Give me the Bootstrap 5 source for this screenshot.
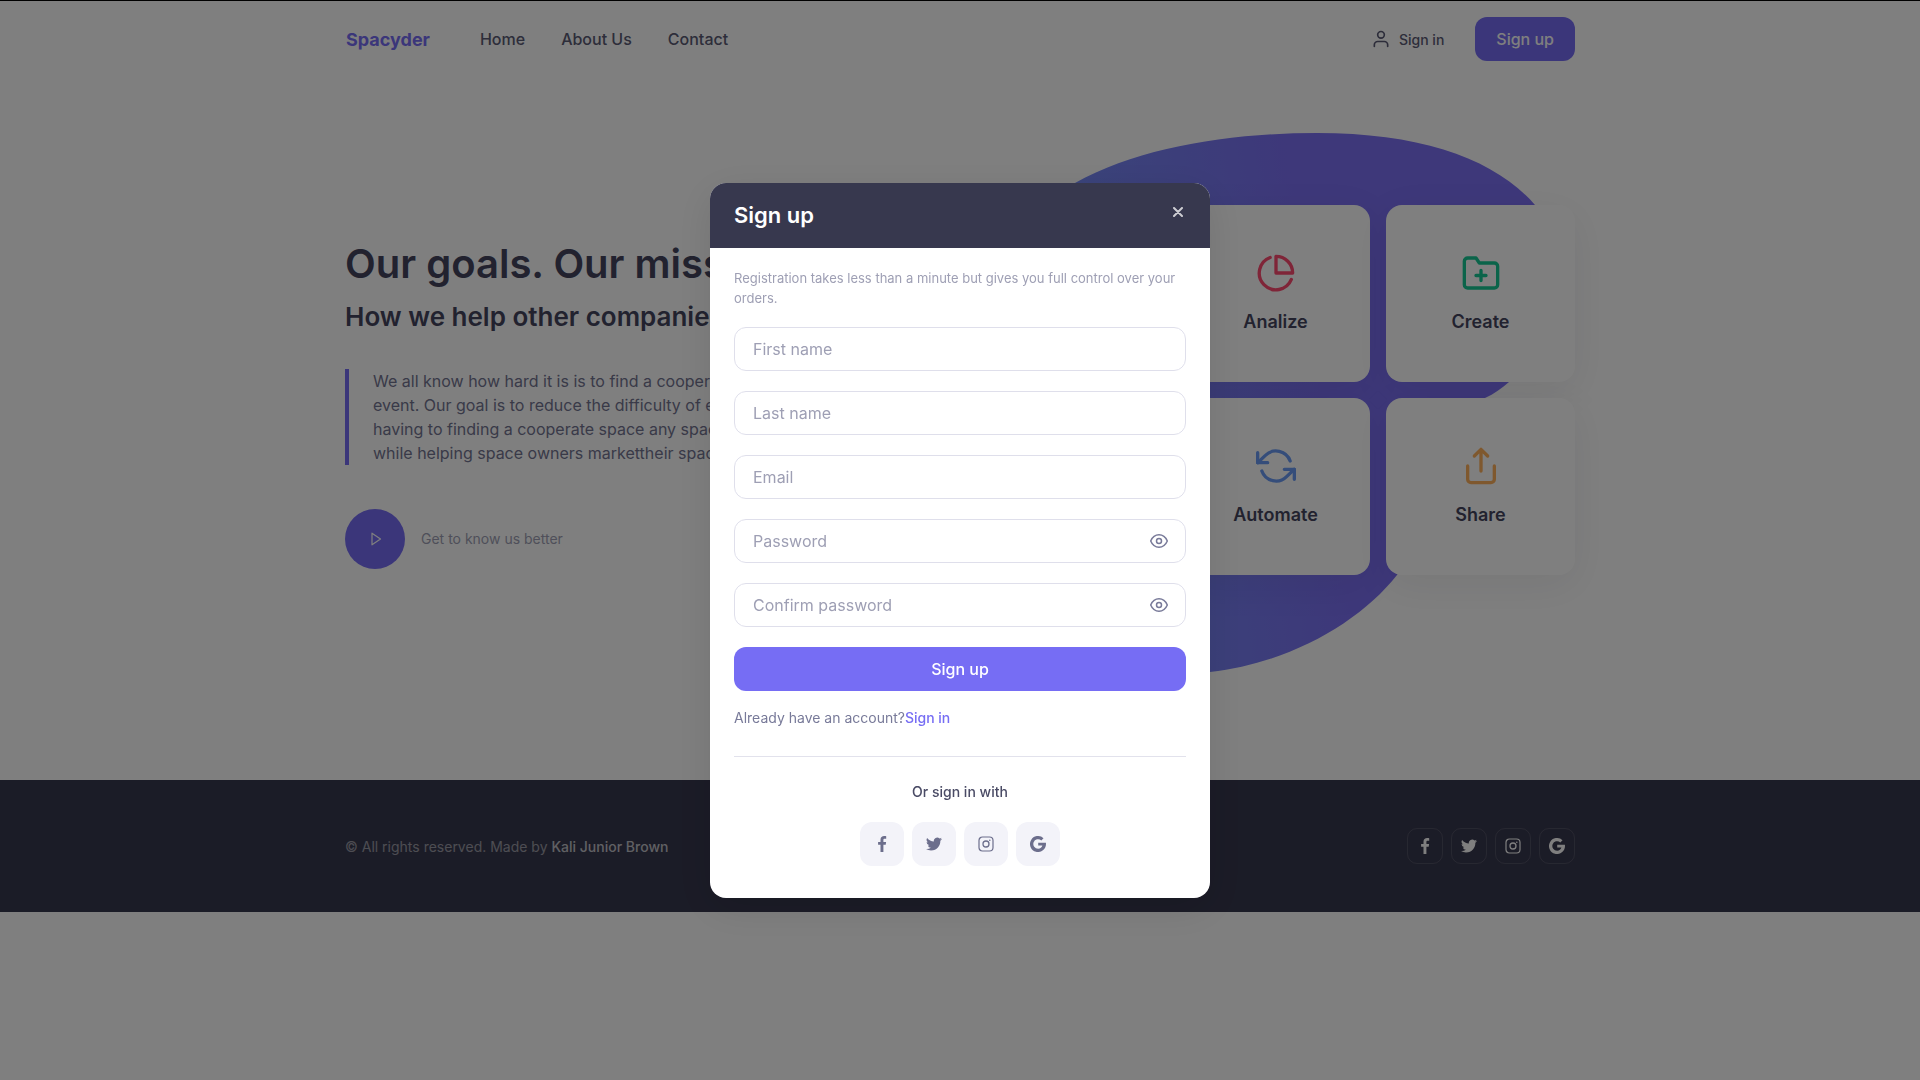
<!DOCTYPE html>
<html lang="en">
<head>
<meta charset="utf-8">
<meta name="viewport" content="width=device-width, initial-scale=1">
<title>Spacyder</title>
<link href="https://cdn.jsdelivr.net/npm/bootstrap@5.3.0/dist/css/bootstrap.min.css" rel="stylesheet">
<style>
  :root {
    --brand: #766df4;
    --ink: #37384e;
    --heading: #44455e;
    --body: #5a5b75;
    --soft: #787a99;
    --muted: #9e9fb4;
    --line: #dfdfeb;
  }
  body { font-family: Inter, "Noto Sans", sans-serif; color: var(--body); background: #fff; border-top: 1px solid #000; }
  a { text-decoration: none; }
  .wrap { max-width: 1260px; padding-inline: 15px; }
  .ico { fill: none; stroke: currentColor; stroke-width: 2; stroke-linecap: round; stroke-linejoin: round; flex: none; }
  .solid { fill: currentColor; flex: none; }

  .site-nav { padding-block: 16px; }
  .site-nav .navbar-brand { color: var(--brand); font-size: 18px; font-weight: 700; line-height: 28px; margin-right: 32px; padding: 2px 0 0 1px; }
  .site-nav .navbar-nav .nav-link { color: var(--body); font-weight: 500; padding: 8px 18px; }
  .signin { color: var(--body); font-size: 14px; font-weight: 500; margin-right: 31px; }
  .btn-brand { background: var(--brand); color: #fff; border: 0; border-radius: 12px; font-weight: 500; line-height: 24px; padding: 10px 21px; }
  .btn-brand:hover { background: #5e53f2; color: #fff; }

  .hero { padding: 128px 0 205px; }
  .pitch { padding-top: 35px; white-space: nowrap; }
  .pitch h1 { color: var(--heading); font-size: 40px; font-weight: 600; line-height: 48px; margin-bottom: 12px; }
  .pitch h2 { color: var(--heading); font-size: 26px; font-weight: 600; line-height: 34px; margin-bottom: 35px; }
  .quote { color: #737491; border-left: 4px solid var(--brand); padding-left: 24px; line-height: 24px; margin-bottom: 44px; }
  .play { width: 60px; height: 60px; border: 0; border-radius: 50%; background: var(--brand); color: #fff; }
  .play-text { color: var(--muted); font-size: 14px; line-height: 22px; }

  .features { position: relative; width: 394px; }
  .blob { position: absolute; top: -72px; right: 24px; width: 600px; height: 541px; }
  .tiles { position: relative; display: grid; grid-template-columns: 1fr 1fr; gap: 16px; }
  .tile { background: #fff; border-radius: 16px; padding: 48px 16px; box-shadow: 0 10px 40px rgba(30, 33, 44, .07); }
  .tile h3 { color: var(--heading); font-size: 18px; font-weight: 600; line-height: 25px; margin: 16px 0 0; }

  .site-foot { background: var(--ink); color: rgba(255, 255, 255, .5); padding-block: 48px; font-size: 14px; }
  .site-foot .author { color: rgba(255, 255, 255, .7); font-weight: 500; }
  .foot-social { width: 36px; height: 36px; border: 1px solid rgba(255, 255, 255, .12); border-radius: 10px; color: #fff; }

  .modal-content { border: 0; border-radius: 16px; box-shadow: 0 10px 40px rgba(0, 0, 0, .1); color: var(--body); overflow: hidden; }
  .modal-header { background: var(--ink); border: 0; border-radius: 0; padding: 20px 24px; align-items: flex-start; }
  .modal-title { color: #fff; font-size: 22px; font-weight: 600; line-height: 25px; }
  .x-btn { background: none; border: 0; padding: 0; width: 16px; height: 17px; color: #fff; opacity: .75; align-items: flex-end; }
  .modal-body { padding: 20px 24px 32px; }
  .note { color: var(--muted); font-size: 13px; line-height: 20px; margin-bottom: 19px; }
  .modal-body .form-control { height: 44px; border: 1px solid var(--line); border-radius: 12px; padding: 9px 18px; font-size: 16px; color: var(--body); }
  .modal-body .form-control::placeholder { color: var(--muted); }
  .fields { display: grid; gap: 20px; }
  .eye { position: absolute; top: 12px; right: 17px; width: 20px; height: 20px; border: 0; padding: 0; background: none; color: var(--soft); }
  .eye .ico { stroke-width: 1.5; }
  .already { color: var(--soft); font-size: 14px; line-height: 22px; margin: 16px 0 0; }
  .already a { color: var(--brand); font-weight: 500; }
  .split { border-top: 1px solid #e2e2ec; opacity: 1; margin: 27px 0 24px; }
  .or { color: #4a4b65; font-size: 14px; font-weight: 500; line-height: 22px; margin-bottom: 19px; }
  .modal-social { width: 44px; height: 44px; border-radius: 12px; background: #f3f3f9; color: #6c6e8c; }
</style>
</head>
<body class="d-flex flex-column">

<svg class="d-none" aria-hidden="true">
  <symbol id="facebook" viewBox="0 0 16 16"><path d="M9.400 16V8.700h2.300l.4-2.800H9.400V4.200c0-.9.3-1.400 1.400-1.400h1.400V.2C11.900.1 11.100 0 10.200 0 8 0 6.500 1.300 6.500 3.700v2.200H4.100v2.800h2.400V16z"/></symbol>
  <symbol id="twitter" viewBox="0 0 24 24"><path d="M24 4.600a10 10 0 0 1-2.800.8 4.900 4.900 0 0 0 2.200-2.700c-1 .6-2 1-3.100 1.200a4.900 4.900 0 0 0-8.400 4.500A14 14 0 0 1 1.700 3.100a4.900 4.900 0 0 0 1.500 6.600 4.900 4.900 0 0 1-2.200-.6v.1a4.900 4.900 0 0 0 3.900 4.800 5 5 0 0 1-2.200.1 4.900 4.900 0 0 0 4.600 3.400A9.900 9.900 0 0 1 0 19.500 13.900 13.900 0 0 0 7.500 21.700c9.100 0 14-7.500 14-14v-.6A10 10 0 0 0 24 4.600z"/></symbol>
  <symbol id="instagram" viewBox="0 0 16 16"><rect x="1" y="1" width="14" height="14" rx="3.500" fill="none" stroke="currentColor" stroke-width="1.200"/><circle cx="8" cy="8" r="3" fill="none" stroke="currentColor" stroke-width="1.300"/><circle cx="11.800" cy="4.200" r=".8"/></symbol>
  <symbol id="google" viewBox="0 0 16 16"><path d="M8.200 6.700v2.900h4.200c-.5 1.900-2.100 3.200-4.200 3.200a4.800 4.800 0 1 1 3.100-8.400l2.200-2.200A8 8 0 1 0 16 8c0-.4 0-.9-.1-1.300z"/></symbol>
  <symbol id="eye-icon" viewBox="0 0 20 20"><path d="M1.700 10C3.400 6 6.500 3.800 10 3.800S16.600 6 18.300 10c-1.700 4-4.800 6.200-8.300 6.200S3.400 14 1.700 10z"/><circle cx="10" cy="10" r="2.500"/></symbol>
</svg>

<header class="navbar navbar-expand site-nav">
  <div class="container-fluid wrap">
    <a class="navbar-brand" href="#">Spacyder</a>
    <ul class="navbar-nav me-auto">
      <li class="nav-item"><a class="nav-link" href="#">Home</a></li>
      <li class="nav-item"><a class="nav-link" href="#">About Us</a></li>
      <li class="nav-item"><a class="nav-link" href="#">Contact</a></li>
    </ul>
    <a class="signin d-flex align-items-center gap-2" href="#">
      <svg class="ico" width="20" height="20" viewBox="0 0 24 24" aria-hidden="true"><path d="M20 21v-2a4 4 0 0 0-4-4H8a4 4 0 0 0-4 4v2"/><circle cx="12" cy="7" r="4"/></svg>
      Sign in
    </a>
    <button class="btn btn-brand" type="button">Sign up</button>
  </div>
</header>

<main class="hero">
  <div class="container-fluid wrap d-flex justify-content-between align-items-start">
    <section class="pitch">
      <h1>Our goals. Our mission.</h1>
      <h2>How we help other companies</h2>
      <p class="quote">We all know how hard it is is to find a cooperate space for<br>event. Our goal is to reduce the difficulty of event planners<br>having to finding a cooperate space any space of choice<br>while helping space owners markettheir space</p>
      <div class="d-flex align-items-center gap-3">
        <button class="play d-flex align-items-center justify-content-center" type="button" aria-label="Play video">
          <svg class="ico" width="16" height="16" viewBox="0 0 16 16" aria-hidden="true"><path stroke-width="1.200" d="M5 2.200v11.600L13.500 8z"/></svg>
        </button>
        <span class="play-text">Get to know us better</span>
      </div>
    </section>

    <section class="features">
      <svg class="blob" viewBox="951 133 600 541" preserveAspectRatio="none" aria-hidden="true">
        <defs><linearGradient id="tint" gradientUnits="userSpaceOnUse" x1="1060" y1="420" x2="1320" y2="385"><stop offset="0" stop-color="#748ef6"/><stop offset="1" stop-color="#7c70f4"/></linearGradient></defs>
        <path fill="url(#tint)" d="M1317 133C1424 133 1496 160 1535 205C1572 262 1551 342 1509 382C1502 388 1494 394 1485 398C1436 428 1440 518 1397 575C1360 622 1290 663 1210 672C1080 688 951 580 951 430C951 320 1000 226 1075 183C1140 147 1230 133 1317 133Z"/>
      </svg>
      <div class="tiles text-center">
        <article class="tile">
          <svg class="ico" style="color:#ff4b71" width="40" height="40" viewBox="0 0 24 24" aria-hidden="true"><path d="M21.210 15.890A10 10 0 1 1 8.500 2.700"/><path d="M22 12A10 10 0 0 0 12 2v10z"/></svg>
          <h3>Analize</h3>
        </article>
        <article class="tile">
          <svg class="ico" style="color:#16c995" width="40" height="40" viewBox="0 0 24 24" aria-hidden="true"><path d="M22 19a2 2 0 0 1-2 2H4a2 2 0 0 1-2-2V5a2 2 0 0 1 2-2h5l2 3h9a2 2 0 0 1 2 2zM12 10.500v6M9 13.500h6"/></svg>
          <h3>Create</h3>
        </article>
        <article class="tile">
          <svg class="ico" style="color:#6a9bf4" width="40" height="40" viewBox="0 0 24 24" aria-hidden="true"><path d="M1 4v6h6M23 20v-6h-6"/><path d="M20.490 9A9 9 0 0 0 5.640 5.640L1 10m22 4l-4.640 4.360A9 9 0 0 1 3.510 15"/></svg>
          <h3>Automate</h3>
        </article>
        <article class="tile">
          <svg class="ico" style="color:#ffb15c" width="40" height="40" viewBox="0 0 24 24" aria-hidden="true"><path d="M4 12v8a2 2 0 0 0 2 2h12a2 2 0 0 0 2-2v-8M16 6l-4-4-4 4M12 2v13"/></svg>
          <h3>Share</h3>
        </article>
      </div>
    </section>
  </div>
</main>

<footer class="site-foot">
  <div class="container-fluid wrap d-flex justify-content-between align-items-center">
    <span>© All rights reserved. Made by <a class="author" href="#">Kali Junior Brown</a></span>
    <div class="d-flex gap-2">
      <a class="foot-social d-flex align-items-center justify-content-center" href="#" aria-label="Facebook"><svg class="solid" width="16" height="16"><use href="#facebook"/></svg></a>
      <a class="foot-social d-flex align-items-center justify-content-center" href="#" aria-label="Twitter"><svg class="solid" width="16" height="16"><use href="#twitter"/></svg></a>
      <a class="foot-social d-flex align-items-center justify-content-center" href="#" aria-label="Instagram"><svg class="solid" width="16" height="16"><use href="#instagram"/></svg></a>
      <a class="foot-social d-flex align-items-center justify-content-center" href="#" aria-label="Google"><svg class="solid" width="16" height="16"><use href="#google"/></svg></a>
    </div>
  </div>
</footer>

<div class="modal-backdrop show"></div>
<div class="modal show d-block" tabindex="-1" role="dialog" aria-modal="true" aria-labelledby="signup-title">
  <div class="modal-dialog modal-dialog-centered">
    <div class="modal-content">
      <div class="modal-header justify-content-between">
        <h2 class="modal-title" id="signup-title">Sign up</h2>
        <button class="x-btn d-flex" type="button" aria-label="Close"><svg class="ico" width="16" height="16" viewBox="0 0 16 16" aria-hidden="true"><path d="M4 4l8 8M12 4l-8 8"/></svg></button>
      </div>
      <div class="modal-body">
        <p class="note">Registration takes less than a minute but gives you full control over your orders.</p>
        <form class="fields">
          <div><label class="visually-hidden" for="first">First name</label><input class="form-control" id="first" type="text" placeholder="First name"></div>
          <div><label class="visually-hidden" for="last">Last name</label><input class="form-control" id="last" type="text" placeholder="Last name"></div>
          <div><label class="visually-hidden" for="email">Email</label><input class="form-control" id="email" type="email" placeholder="Email"></div>
          <div class="position-relative"><label class="visually-hidden" for="pass">Password</label><input class="form-control" id="pass" type="password" placeholder="Password"><button class="eye d-flex" type="button" aria-label="Show password"><svg class="ico" width="20" height="20"><use href="#eye-icon"/></svg></button></div>
          <div class="position-relative"><label class="visually-hidden" for="confirm">Confirm password</label><input class="form-control" id="confirm" type="password" placeholder="Confirm password"><button class="eye d-flex" type="button" aria-label="Show confirmed password"><svg class="ico" width="20" height="20"><use href="#eye-icon"/></svg></button></div>
          <button class="btn btn-brand w-100" type="submit">Sign up</button>
        </form>
        <p class="already">Already have an account?<a href="#">Sign in</a></p>
        <hr class="split">
        <p class="or text-center">Or sign in with</p>
        <div class="d-flex justify-content-center gap-2">
          <a class="modal-social d-flex align-items-center justify-content-center" href="#" aria-label="Facebook"><svg class="solid" width="16" height="16"><use href="#facebook"/></svg></a>
          <a class="modal-social d-flex align-items-center justify-content-center" href="#" aria-label="Twitter"><svg class="solid" width="16" height="16"><use href="#twitter"/></svg></a>
          <a class="modal-social d-flex align-items-center justify-content-center" href="#" aria-label="Instagram"><svg class="solid" width="16" height="16"><use href="#instagram"/></svg></a>
          <a class="modal-social d-flex align-items-center justify-content-center" href="#" aria-label="Google"><svg class="solid" width="16" height="16"><use href="#google"/></svg></a>
        </div>
      </div>
    </div>
  </div>
</div>

<script src="https://cdn.jsdelivr.net/npm/bootstrap@5.3.0/dist/js/bootstrap.bundle.min.js"></script>
</body>
</html>
